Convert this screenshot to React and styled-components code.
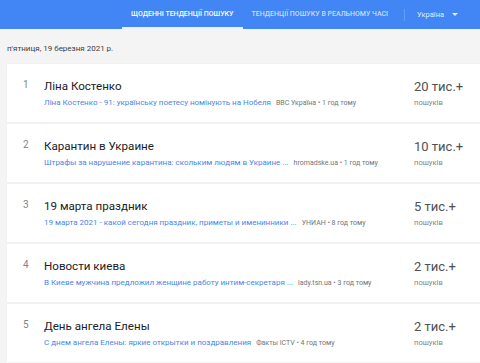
import React from "react";
import styled, { createGlobalStyle } from "styled-components";

const GlobalStyle = createGlobalStyle`
  body {
    margin: 0;
    background: #f4f4f4;
    font-family: Roboto, "Noto Sans", Arial, sans-serif;
    overflow: hidden;
  }
`;

const trends = [
  {
    title: "Ліна Костенко",
    snippet: "Ліна Костенко - 91: українську поетесу номінують на Нобеля",
    source: "BBC Україна • 1 год тому",
    count: "20 тис.+",
  },
  {
    title: "Карантин в Украине",
    snippet: "Штрафы за нарушение карантина: скольким людям в Украине ...",
    source: "hromadske.ua • 1 год тому",
    count: "10 тис.+",
  },
  {
    title: "19 марта праздник",
    snippet: "19 марта 2021 - какой сегодня праздник, приметы и именинники ...",
    source: "УНИАН • 8 год тому",
    count: "5 тис.+",
  },
  {
    title: "Новости киева",
    snippet: "В Киеве мужчина предложил женщине работу интим-секретаря ...",
    source: "lady.tsn.ua • 3 год тому",
    count: "2 тис.+",
  },
  {
    title: "День ангела Елены",
    snippet: "С днем ангела Елены: яркие открытки и поздравления",
    source: "Факты ICTV • 4 год тому",
    count: "2 тис.+",
  },
];

const App = () => (
  <>
    <GlobalStyle />
    <TopBar>
      <Tab active>ЩОДЕННІ ТЕНДЕНЦІЇ ПОШУКУ</Tab>
      <Tab>ТЕНДЕНЦІЇ ПОШУКУ В РЕАЛЬНОМУ ЧАСІ</Tab>
      <Divider />
      <Country>
        Україна
        <Caret />
      </Country>
    </TopBar>
    <DateLine>п'ятниця, 19 березня 2021 р.</DateLine>
    <List>
      {trends.map((t, i) => (
        <Row key={t.title}>
          <Rank>{i + 1}</Rank>
          <Details>
            <Title>{t.title}</Title>
            <Meta>
              <Snippet>{t.snippet}</Snippet>
              <Source>{t.source}</Source>
            </Meta>
          </Details>
          <Count>
            <CountValue>{t.count}</CountValue>
            <CountLabel>пошуків</CountLabel>
          </Count>
        </Row>
      ))}
    </List>
  </>
);

const TopBar = styled.header`
  display: flex;
  align-items: stretch;
  height: 29px;
  padding-left: 122px;
  background: #4285f4;
  box-sizing: border-box;
`;

const Tab = styled.div`
  display: flex;
  align-items: center;
  padding: 0 9px;
  font-size: 7px;
  font-weight: 500;
  color: ${({ active }) => (active ? "#ffffff" : "rgba(255,255,255,0.72)")};
  border-bottom: 2px solid
    ${({ active }) => (active ? "rgba(255,255,255,0.9)" : "transparent")};
  white-space: nowrap;
`;

const Divider = styled.div`
  width: 1px;
  height: 12px;
  align-self: center;
  margin: 0 12px 0 7px;
  background: rgba(255, 255, 255, 0.2);
`;

const Country = styled.div`
  display: flex;
  align-items: center;
  gap: 8px;
  font-size: 7.5px;
  color: rgba(255, 255, 255, 0.88);
`;

const Caret = styled.span`
  width: 0;
  height: 0;
  border-left: 3px solid transparent;
  border-right: 3px solid transparent;
  border-top: 3.5px solid rgba(255, 255, 255, 0.88);
`;

const DateLine = styled.div`
  padding: 15px 7px 0;
  height: 20px;
  font-size: 8px;
  line-height: 10px;
  color: #3c4043;
`;

const List = styled.div`
  display: flex;
  flex-direction: column;
  gap: 2px;
  margin-left: 7px;
`;

const Row = styled.div`
  display: flex;
  height: 58px;
  background: #ffffff;
  box-shadow: 0 0 1px rgba(0, 0, 0, 0.08);
`;

const Rank = styled.div`
  width: 37px;
  padding: 15px 0 0 16px;
  box-sizing: border-box;
  font-size: 10px;
  line-height: 12px;
  color: #80868b;
`;

const Details = styled.div`
  flex: 1;
  min-width: 0;
  padding-top: 15px;
`;

const Title = styled.div`
  font-size: 11.6px;
  line-height: 14px;
  color: #202124;
`;

const Meta = styled.div`
  display: flex;
  align-items: baseline;
  gap: 5px;
  margin-top: 5px;
  line-height: 10px;
  white-space: nowrap;
`;

const Snippet = styled.span`
  font-size: 8px;
  color: #4a86e8;
`;

const Source = styled.span`
  font-size: 7px;
  color: #70757a;
`;

const Count = styled.div`
  width: 66px;
  padding-top: 15px;
  flex-shrink: 0;
`;

const CountValue = styled.div`
  font-size: 13px;
  line-height: 15px;
  color: #4d5156;
`;

const CountLabel = styled.div`
  margin-top: 4px;
  font-size: 7.6px;
  line-height: 10px;
  color: #80868b;
`;

export default App;
